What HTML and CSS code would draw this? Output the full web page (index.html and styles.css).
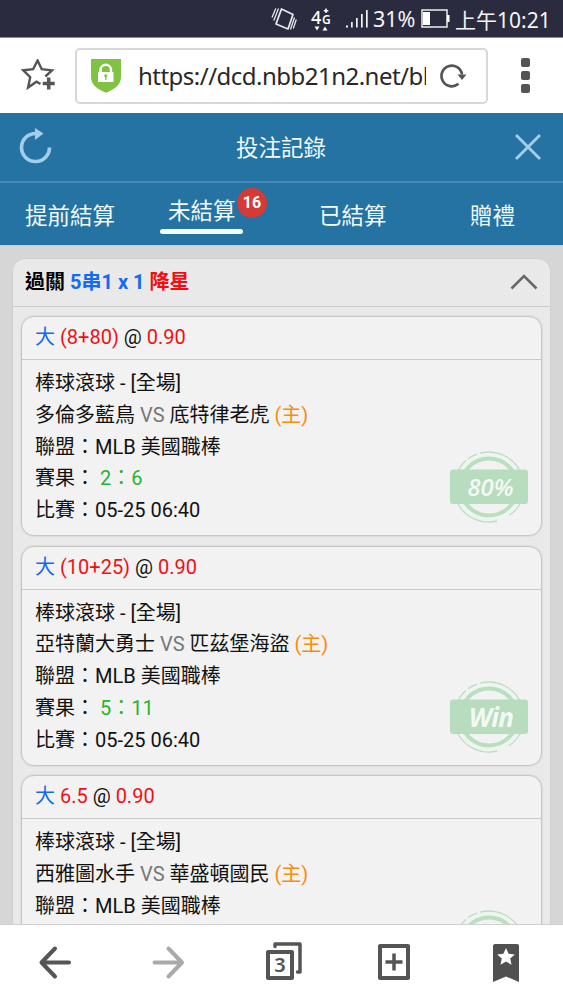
FILE: index.html
```html
<!DOCTYPE html>
<html lang="zh-Hant">
<head>
<meta charset="utf-8">
<title>投注記錄</title>
<link rel="stylesheet" href="styles.css">
</head>
<body>
<div class="screen">
  <div class="status">
    <svg class="st-vibrate" width="27" height="24" viewBox="0 0 27 24" fill="none" stroke="#e6e6ec" stroke-width="1.3">
      <path d="M10.500 2 22 7.500 17 22 5 17Z" stroke-width="1.800" stroke-linejoin="round"/>
      <path d="M7.500 1.500 2.800 13.500M4.800 1.500 1 10.500M19.500 22.500l4-12M22.300 21.500l3-9"/>
    </svg>
    <svg class="net" width="22" height="26" viewBox="0 0 22 26" fill="#fff">
      <text x="0" y="18" class="net-four">4</text><text x="11" y="18" class="net-g">G</text>
      <path d="M3.500 20.500h5l-2.500 4zM11.500 24.500h5l-2.500-4zM14.300 2.500h1.500v1.500h1.500v1.400h-1.500v1.500h-1.500V5.400h-1.500V4h1.500z"/>
    </svg>
    <svg class="st-signal" width="23" height="20" viewBox="0 0 23 20" fill="#f2f2f5"><path d="M0 16.500h2v2H0zM5 13h1.700v5.500H5zM10 9h1.700v9.500H10zM15 5h1.700v13.500H15zM20 1h1.700v17.500H20z"/></svg>
    <span class="percent">31%</span>
    <svg class="st-battery" width="29" height="19" viewBox="0 0 29 19"><path d="M1 1h25v17H1z" fill="none" stroke="#eee" stroke-width="1.5"/><path d="M2 3h7v13H2zM26 6h2.500v7H26z" fill="#fff"/></svg>
    <span class="clock">上午10:21</span>
  </div>

  <div class="browser">
    <svg class="star" width="36" height="34" viewBox="0 0 36 34" fill="none" stroke="#555">
      <path d="M19.5 25 15.500 22.700 7.100 28.500 9.200 18.200 2.300 11.300 12.100 10.200 16.600 1.500 20.700 10.200 31 11.300 24.300 17.500" stroke-width="2.400"/>
      <path d="M27.700 18.500v12M21.700 24.500h12" stroke-width="3.500"/>
    </svg>
    <div class="address">
      <svg class="shield" width="30" height="34" viewBox="0 0 30 34">
        <path d="M0 0h30v18c0 8-7 12.500-15 15.800C7 30.500 0 26 0 18z" fill="#80c342"/>
        <path d="M9.500 14v-3a5 5 0 0 1 10.500 0v3" fill="none" stroke="#fff" stroke-width="2.400"/>
        <path d="M7 13h15.500v10H7z" fill="#fff"/><circle cx="14.800" cy="16.800" r="1.600" fill="#80c342"/><path d="M14.800 17v4" stroke="#80c342" stroke-width="1.300"/>
      </svg>
      <span class="url">https://dcd.nbb21n2.net/bb</span>
      <svg class="reload" width="27" height="26" viewBox="0 0 27 26"><path d="M18.500 20.800A10.300 10.300 0 1 1 22 11.500" fill="none" stroke="#555" stroke-width="2.700"/><path d="M17.500 11.500H26.500L22 17z" fill="#555"/></svg>
    </div>
    <div class="more"><i></i><i></i><i></i></div>
  </div>

  <div class="titlebar">
    <svg width="34" height="38" viewBox="0 0 34 38"><path d="M31.500 19.500A14 14 0 1 1 17.500 5.500" fill="none" stroke="#a3cdea" stroke-width="3.600"/><path d="M17 0 25.500 5.500 17 12z" fill="#a3cdea"/></svg>
    <h1>投注記錄</h1>
    <svg width="28" height="28" viewBox="0 0 28 28" stroke="#a3cdea" stroke-width="2.900"><path d="M2 2l24 24M26 2 2 26"/></svg>
  </div>
  <div class="tabs">
    <div class="tab t1">提前結算</div>
    <div class="tab t2"><span>未結算</span><i class="underline"></i><b class="badge">16</b></div>
    <div class="tab t3">已結算</div>
    <div class="tab t4">贈禮</div>
  </div>

  <div class="content">
    <div class="panel">
      <div class="panel-head">
        <span>過關 <span class="blue">5串1 x 1</span> <span class="hot">降星</span></span>
        <svg width="28" height="16" viewBox="0 0 28 16"><path d="M1.500 14.500 14 2 26.500 14.500" fill="none" stroke="#666" stroke-width="2.500"/></svg>
      </div>
      <div class="cards">
        <div class="card">
          <div class="card-head"><span class="pick">大</span> <span class="red">(8+80)</span> @ <span class="red">0.90</span></div>
          <div class="card-body">
            <p>棒球滾球 - [全場]</p>
            <p>多倫多藍鳥 <span class="vs">VS</span> 底特律老虎 <span class="home">(主)</span></p>
            <p>聯盟：MLB 美國職棒</p>
            <p>賽果： <span class="score">2：6</span></p>
            <p>比賽：05-25 06:40</p>
            <svg class="stamp" width="80" height="72" viewBox="0 0 80 72">
              <circle cx="40" cy="36" r="35" fill="#edf6ee"/><circle cx="40" cy="36" r="26" fill="#f2f2f2"/>
              <path d="M31 2.200A35 35 0 0 1 72 22M19 7.800A35 35 0 0 1 28 3.200M8 22A35 35 0 0 1 17 9.500M9 53A35 35 0 0 0 48 70M60 64.500A35 35 0 0 0 71 53" fill="none" stroke="#c3d9c8" stroke-width="1.300"/>
              <circle cx="40" cy="36" r="28.500" fill="none" stroke="#b9dec0" stroke-width="4"/>
              <rect x="1" y="18.500" width="78" height="34.500" rx="3" fill="#b7dcbe"/>
              <text x="41.500" y="45" class="stamp-text">80%</text>
            </svg>
          </div>
        </div>
        <div class="card">
          <div class="card-head"><span class="pick">大</span> <span class="red">(10+25)</span> @ <span class="red">0.90</span></div>
          <div class="card-body">
            <p>棒球滾球 - [全場]</p>
            <p>亞特蘭大勇士 <span class="vs">VS</span> 匹茲堡海盜 <span class="home">(主)</span></p>
            <p>聯盟：MLB 美國職棒</p>
            <p>賽果： <span class="score">5：11</span></p>
            <p>比賽：05-25 06:40</p>
            <svg class="stamp" width="80" height="72" viewBox="0 0 80 72">
              <circle cx="40" cy="36" r="35" fill="#edf6ee"/><circle cx="40" cy="36" r="26" fill="#f2f2f2"/>
              <path d="M31 2.200A35 35 0 0 1 72 22M19 7.800A35 35 0 0 1 28 3.200M8 22A35 35 0 0 1 17 9.500M9 53A35 35 0 0 0 48 70M60 64.500A35 35 0 0 0 71 53" fill="none" stroke="#c3d9c8" stroke-width="1.300"/>
              <circle cx="40" cy="36" r="28.500" fill="none" stroke="#b9dec0" stroke-width="4"/>
              <rect x="1" y="18.500" width="78" height="34.500" rx="3" fill="#b7dcbe"/>
              <text x="42" y="45.500" class="stamp-text win">Win</text>
            </svg>
          </div>
        </div>
        <div class="card">
          <div class="card-head"><span class="pick">大</span> <span class="red">6.5</span> @ <span class="red">0.90</span></div>
          <div class="card-body">
            <p>棒球滾球 - [全場]</p>
            <p>西雅圖水手 <span class="vs">VS</span> 華盛頓國民 <span class="home">(主)</span></p>
            <p>聯盟：MLB 美國職棒</p>
            <svg class="stamp" width="80" height="72" viewBox="0 0 80 72">
              <circle cx="40" cy="36" r="35" fill="#edf6ee"/><circle cx="40" cy="36" r="26" fill="#f2f2f2"/>
              <path d="M31 2.200A35 35 0 0 1 72 22M19 7.800A35 35 0 0 1 28 3.200M8 22A35 35 0 0 1 17 9.500" fill="none" stroke="#c3d9c8" stroke-width="1.300"/>
              <circle cx="40" cy="36" r="28.500" fill="none" stroke="#b9dec0" stroke-width="4"/>
            </svg>
          </div>
        </div>
      </div>
    </div>
  </div>

  <div class="nav">
    <svg width="34" height="40" viewBox="0 0 34 40" fill="none" stroke="#555" stroke-width="4" stroke-linecap="round" stroke-linejoin="round"><path d="M17 5.500 3.500 19.500 17 33.500M4.500 19.500H31"/></svg>
    <svg class="forward" width="34" height="40" viewBox="0 0 34 40" fill="none" stroke="#aaa" stroke-width="4" stroke-linecap="round" stroke-linejoin="round"><path d="M17.500 5.500 31 19.500 17.500 33.500M30 19.500H3.500"/></svg>
    <div class="pages">
      <svg width="36" height="38" viewBox="0 0 36 38" fill="none" stroke="#555" stroke-width="4" stroke-linejoin="round" stroke-linecap="round"><path d="M2 10h24v26H2z"/><path d="M9 4.500V2H34V30H31.500" stroke-width="3.500"/></svg>
      <span class="pages-count">3</span>
    </div>
    <svg class="add" width="32" height="36" viewBox="0 0 32 36" fill="none" stroke="#555" stroke-width="4" stroke-linejoin="round"><path d="M2 2h28v32H2z"/><path d="M16 9.500v17M7.500 18h17" stroke-width="3.500"/></svg>
    <svg class="bookmark" width="26" height="38" viewBox="0 0 26 38"><path d="M2 0h22q2 0 2 2V38L13 32.500 0 38V2Q0 0 2 0z" fill="#505050"/><path d="M13 4l2.600 5.700 6.200.7-4.600 4.200 1.300 6.100-5.500-3.100-5.500 3.100 1.300-6.100-4.600-4.200 6.200-.7z" fill="#fff"/></svg>
  </div>
</div>
</body>
</html>
```
FILE: styles.css
```css
* { box-sizing: border-box; margin: 0; padding: 0; }
body { font-family: Roboto, "Noto Sans CJK TC", sans-serif; background: #fff; color: #111; }
svg { display: block; flex: none; }
.screen { width: 563px; height: 1000px; overflow: hidden; display: flex; flex-direction: column; }
.screen > div { flex: none; }

.status { height: 38px; background: #2a2b3e; color: #f5f5f8; display: flex; align-items: center; padding-left: 271px; font-family: "Noto Sans", "Noto Sans CJK TC", sans-serif; white-space: nowrap; border-bottom: 1px solid #8c8a98; }
.net { margin-left: 13px; }
.net-four { font: 500 18px "Noto Sans", sans-serif; }
.net-g { font: 600 12px "Noto Sans", sans-serif; }
.st-signal { margin-left: 13px; }
.percent { font-size: 21.5px; margin-left: 4px; width: 48px; }
.clock { font-size: 21px; margin-left: 5px; }

.browser { height: 75px; background: #fff; display: flex; align-items: center; padding: 0 0 0 21px; }
.address { width: 413px; height: 56px; margin-left: 18px; border: 2px solid #d8d8da; border-radius: 5px; display: flex; align-items: center; padding-left: 14px; }
.url { font-family: "Noto Sans", sans-serif; font-size: 24px; letter-spacing: -0.52px; width: 288px; margin-left: 17px; overflow: hidden; white-space: nowrap; color: #282828; }
.reload { margin-left: 14px; }
.more { display: flex; flex-direction: column; gap: 4px; margin-left: 33px; }
.more i { width: 9px; height: 9px; background: #555; border-radius: 2px; }

.titlebar { height: 70px; background: #2473a2; color: #f1fbff; display: flex; align-items: center; justify-content: space-between; padding: 0 21px 0 18px; border-bottom: 2px solid #4589b4; }
.titlebar h1 { font-size: 22.5px; font-weight: 400; padding: 0 4px 3px 0; }
.tabs { height: 62px; background: #2473a2; color: #f1fbff; display: flex; font-size: 22.5px; line-height: 66px; white-space: nowrap; }
.t1 { padding-left: 25px; width: 160px; }
.t2 { position: relative; width: 83px; padding: 0 8px; line-height: 56px; }
.underline { position: absolute; left: 0; top: 46px; width: 83px; height: 5px; border-radius: 2.5px; background: #f4fbff; }
.badge { position: absolute; left: 77px; top: 5px; width: 30px; height: 30px; border-radius: 50%; background: #d63a37; color: #fff; font-size: 16px; font-weight: 700; line-height: 30px; text-align: center; }
.t3 { width: 226px; padding-left: 76px; }
.t4 { padding-left: 1px; }

.content { height: 679px; overflow: hidden; background: #d6d6d7; padding: 12px 12px 0; border-top: 1px solid #c4cdd5; }
.panel { background: #e9e9e9; border: 1px solid #d0d0d0; border-radius: 13px 13px 0 0; height: 800px; }
.panel-head { height: 48px; border-bottom: 1px solid #cbcbcb; display: flex; align-items: center; justify-content: space-between; padding: 0 12px 2px; font-size: 20px; font-weight: 700; color: #000; }
.panel-head > span { padding-bottom: 2px; }
.blue { color: #126bf0; }
.hot { color: #fa0a0d; }
.cards { padding: 9px 8px 0; display: flex; flex-direction: column; gap: 9.5px; }
.card { height: 220px; border: 1px solid #c6c6c6; border-radius: 13px; background: #f2f2f2; box-shadow: 0 0 0 1px #dedede; font-size: 20px; white-space: nowrap; }
.card-head { height: 43px; padding-left: 13px; line-height: 41px; border-bottom: 1px solid #c9c9c9; }
.card-body { position: relative; padding: 8px 13px 0; line-height: 31.8px; }
.pick { color: #126bea; }
.red { color: #f20f14; }
.vs { color: #777; }
.home { color: #fa8c0c; }
.score { color: #27b42c; }
.stamp { position: absolute; left: 427px; top: 91px; }
.stamp-text { font: italic 600 24px "Open Sans", sans-serif; fill: #f3faf4; text-anchor: middle; }
.win { font-size: 26px; font-weight: 700; letter-spacing: -0.8px; }

.nav { height: 76px; background: #fff; border-top: 1px solid #d0d0d0; display: flex; align-items: center; padding-left: 38px; }
.forward { margin-left: 79px; }
.pages { position: relative; margin: -3px 0 0 81px; }
.add { margin: -2px 0 0 76px; }
.bookmark { margin-left: 83px; }
.pages-count { position: absolute; left: 2px; top: 10px; width: 24px; text-align: center; font: 600 20px/26px "Noto Sans", sans-serif; color: #555; }
```
